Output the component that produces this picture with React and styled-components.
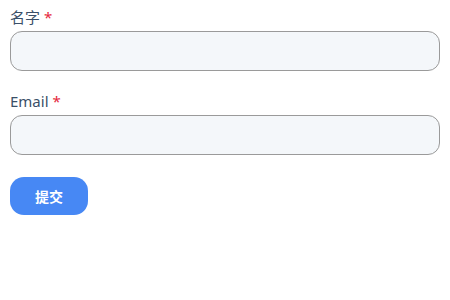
import React from "react";
import styled, { createGlobalStyle } from "styled-components";

const GlobalStyle = createGlobalStyle`
    body {
        margin: 0;
        background: #ffffff;
        font-family: "Noto Sans", "Noto Sans CJK SC", sans-serif;
    }
`;

const Form = styled.form`
    padding: 7px 10px;
    display: flex;
    flex-direction: column;
`;

const Field = styled.div`
    display: flex;
    flex-direction: column;
    margin-bottom: 20px;
`;

const Label = styled.label`
    font-size: 15px;
    line-height: 20px;
    color: #3a4f68;
    margin-bottom: 4px;

    span {
        color: #e5283c;
        margin-left: 4px;
    }
`;

const Input = styled.input`
    box-sizing: border-box;
    width: 100%;
    height: 40px;
    border: 1px solid #9a9a9a;
    border-radius: 12px;
    background: #f4f7fa;
    padding: 0 12px;
    font-size: 14px;
    font-family: inherit;
    outline: none;
`;

const Submit = styled.button`
    align-self: flex-start;
    margin-top: 2px;
    height: 38px;
    padding: 0 25px;
    border: none;
    border-radius: 14px;
    background: #4788f4;
    color: #ffffff;
    font-family: "Noto Sans CJK SC", sans-serif;
    font-weight: 700;
    font-size: 14px;
    cursor: pointer;
`;

export default function App() {
    return (
        <>
            <GlobalStyle />
            <Form onSubmit={(e) => e.preventDefault()}>
                <Field>
                    <Label htmlFor="name">名字<span>*</span></Label>
                    <Input type="text" id="name" required />
                </Field>
                <Field>
                    <Label htmlFor="email">Email<span>*</span></Label>
                    <Input type="email" id="email" required />
                </Field>
                <Submit type="submit">提交</Submit>
            </Form>
        </>
    );
}
